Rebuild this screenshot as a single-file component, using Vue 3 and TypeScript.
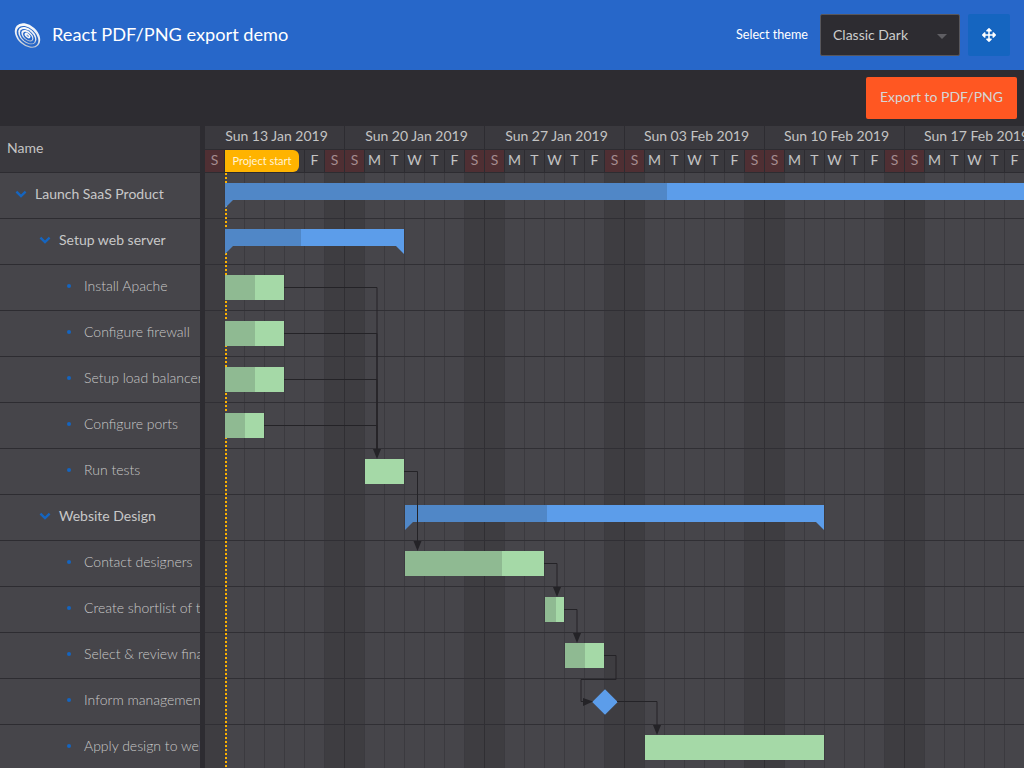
<template>
  <div class="page">
    <header class="topbar">
      <svg class="logo" viewBox="0 0 30 30">
        <defs>
          <linearGradient id="ring" x1="0" y1="0" x2="1" y2="1">
            <stop offset="0" stop-color="#ffffff" />
            <stop offset="0.6" stop-color="#e6eaf0" />
            <stop offset="1" stop-color="#a3acb9" />
          </linearGradient>
        </defs>
        <g transform="rotate(42 15 15)">
          <ellipse cx="15" cy="15" rx="15" ry="10.4" fill="url(#ring)" />
          <ellipse cx="15.6" cy="15.6" rx="13" ry="8.4" fill="#2767c9" />
          <ellipse cx="15" cy="15.2" rx="11" ry="7" fill="url(#ring)" />
          <ellipse cx="15.6" cy="15.6" rx="9.4" ry="5.6" fill="#2767c9" />
          <ellipse cx="15" cy="15.2" rx="7.4" ry="4.4" fill="url(#ring)" />
          <ellipse cx="15.6" cy="15.4" rx="5.8" ry="3.2" fill="#2767c9" />
          <ellipse cx="15" cy="15" rx="3.6" ry="2" fill="#f4f6f9" />
          <ellipse cx="15.4" cy="15" rx="1.6" ry="0.8" fill="#7f9fd2" />
        </g>
      </svg>
      <h1 class="title">React PDF/PNG export demo</h1>
      <label class="theme-label">Select theme</label>
      <div class="select">
        <span>Classic Dark</span>
        <i class="caret"></i>
      </div>
      <button class="move-btn">
        <svg viewBox="0 0 512 512" width="14" height="14">
          <path fill="#fff" d="M352.201 425.775l-79.196 79.196c-9.373 9.373-24.568 9.373-33.941 0l-79.196-79.196c-15.119-15.119-4.411-40.971 16.971-40.97h51.162V284H127.196v51.162c0 21.382-25.851 32.09-40.971 16.971L7.029 272.937c-9.373-9.373-9.373-24.569 0-33.941L86.225 159.8c15.119-15.119 40.971-4.411 40.971 16.971V228H228V127.196h-51.23c-21.382 0-32.09-25.851-16.971-40.971l79.196-79.196c9.373-9.373 24.568-9.373 33.941 0l79.196 79.196c15.119 15.119 4.411 40.971-16.971 40.971h-51.162V228h100.804v-51.162c0-21.382 25.851-32.09 40.97-16.971l79.196 79.196c9.373 9.373 9.373 24.569 0 33.941L425.773 352.2c-15.119 15.119-40.971 4.411-40.97-16.971V284H284v100.804h51.23c21.382 0 32.09 25.851 16.971 40.971z" />
        </svg>
      </button>
    </header>

    <div class="toolbar">
      <button class="export-btn">Export to PDF/PNG</button>
    </div>

    <div class="gantt">
      <section class="tree">
        <div class="tree-head">Name</div>
        <div v-for="t in tasks" :key="t.name" class="tree-row" :class="{ parent: t.parent }">
          <span class="indent" :style="{ width: t.level * 24 + 'px' }"></span>
          <svg v-if="t.parent" class="chevron" viewBox="0 0 12 8">
            <path d="M1.4 1.6 6 6l4.6-4.4" />
          </svg>
          <span v-else class="bullet"></span>
          <span class="label">{{ t.name }}</span>
        </div>
      </section>

      <div class="splitter"></div>

      <section class="timeline">
        <div class="scale">
          <div class="weeks">
            <div v-for="w in weeks" :key="w" class="week">{{ w }}</div>
          </div>
          <div class="days">
            <div v-for="(d, i) in days" :key="i" class="day" :class="{ off: d.off }">{{ d.letter }}</div>
          </div>
          <div class="marker-label">Project start</div>
        </div>

        <div class="chart">
          <div class="columns">
            <div
              v-for="(d, i) in days"
              :key="i"
              class="col"
              :class="{ off: d.off, 'week-end': i % 7 === 6 }"
            ></div>
          </div>
          <div class="rows">
            <div v-for="t in tasks" :key="t.name" class="row"></div>
          </div>
          <div class="today"></div>

          <svg class="links" width="819" height="595">
            <g fill="none" stroke="#242327" stroke-width="1">
              <path v-for="l in links" :key="l" :d="l" />
            </g>
            <polygon v-for="a in arrows" :key="a" :points="a" fill="#242327" />
          </svg>

          <template v-for="(t, i) in tasks" :key="t.name">
            <div
              v-if="t.parent"
              class="bar project"
              :style="{ left: t.x + 'px', width: t.w + 'px', top: i * 46 + 10 + 'px' }"
            >
              <div class="done" :style="{ width: t.done + 'px' }"></div>
              <i class="tip left"></i>
              <i class="tip right"></i>
            </div>
            <div
              v-else-if="t.w"
              class="bar task"
              :style="{ left: t.x + 'px', width: t.w + 'px', top: i * 46 + 10 + 'px' }"
            >
              <div class="done" :style="{ width: t.done + 'px' }"></div>
            </div>
            <div
              v-else
              class="milestone"
              :style="{ left: t.x + 'px', top: i * 46 + 14 + 'px' }"
            ></div>
          </template>
        </div>
      </section>
    </div>
  </div>
</template>

<script setup lang="ts">
interface Task {
  name: string
  level: number
  parent?: boolean
  x: number
  w: number
  done: number
}

// x is relative to the left edge of the timeline (page x 205)
const tasks: Task[] = [
  { name: 'Launch SaaS Product', level: 0, parent: true, x: 20, w: 1100, done: 442 },
  { name: 'Setup web server', level: 1, parent: true, x: 20, w: 179, done: 76 },
  { name: 'Install Apache', level: 2, x: 20, w: 59, done: 30 },
  { name: 'Configure firewall', level: 2, x: 20, w: 59, done: 30 },
  { name: 'Setup load balancer', level: 2, x: 20, w: 59, done: 30 },
  { name: 'Configure ports', level: 2, x: 20, w: 39, done: 20 },
  { name: 'Run tests', level: 2, x: 160, w: 39, done: 0 },
  { name: 'Website Design', level: 1, parent: true, x: 200, w: 419, done: 142 },
  { name: 'Contact designers', level: 2, x: 200, w: 139, done: 97 },
  { name: 'Create shortlist of three designers', level: 2, x: 340, w: 19, done: 11 },
  { name: 'Select & review final design', level: 2, x: 360, w: 39, done: 20 },
  { name: 'Inform management about decision', level: 2, x: 391, w: 0, done: 0 },
  { name: 'Apply design to website', level: 2, x: 440, w: 179, done: 0 }
]

const weeks = ['13 Jan', '20 Jan', '27 Jan', '03 Feb', '10 Feb', '17 Feb'].map((d) => `Sun ${d} 2019`)

const letters = ['S', 'M', 'T', 'W', 'T', 'F', 'S']
// the marker label covers the first working days, so those cells stay empty
const days = Array.from({ length: 42 }, (_, i) => ({
  letter: i >= 1 && i <= 4 ? '' : letters[i % 7],
  off: i % 7 === 0 || i % 7 === 6
}))

// chart origin is page (205, 173)
const links = [
  'M79 114.5H172V276',
  'M79 160.5H172V276',
  'M79 206.5H172V276',
  'M59 252.5H172V276',
  'M199 298.5H212.5V368',
  'M339 390.5H352V414',
  'M359 436.5H372V460',
  'M399 482.5H411V506.5H376V528.5H378',
  'M412 528.5H452V552'
]
const arrows = [
  '168,276 176,276 172,286',
  '208.5,368 216.5,368 212.5,378',
  '348,414 356,414 352,424',
  '368,460 376,460 372,470',
  '378,525 378,533 388,528.5',
  '448,552 456,552 452,562'
]
</script>

<style scoped>
.page {
  width: 1024px;
  height: 768px;
  overflow: hidden;
  display: flex;
  flex-direction: column;
  background: #2d2c31;
  font-family: Lato, "Open Sans", sans-serif;
}

.topbar {
  height: 70px;
  flex-shrink: 0;
  display: flex;
  align-items: center;
  padding: 0 14px;
  box-sizing: border-box;
  background: #2767c9;
  color: #fff;
}

.logo {
  width: 29px;
  height: 29px;
  flex-shrink: 0;
  margin-left: -1px;
}

.title {
  margin: 0 0 2px 10px;
  font-size: 18.2px;
  font-weight: 400;
  flex: 1;
}

.theme-label {
  font-size: 12.6px;
  margin: 0 12px 2px 0;
}

.select {
  width: 140px;
  height: 42px;
  box-sizing: border-box;
  display: flex;
  align-items: center;
  justify-content: space-between;
  padding: 0 12px 2px;
  background: #2d2c31;
  border: 1px solid #58575c;
  border-radius: 2px;
  color: #ccc;
  font-size: 14px;
}

.caret {
  width: 0;
  height: 0;
  border-left: 5.5px solid transparent;
  border-right: 5.5px solid transparent;
  border-top: 5.5px solid #5f5e63;
  margin-top: 5px;
}

.move-btn {
  width: 42px;
  height: 42px;
  margin-left: 8px;
  border: none;
  border-radius: 2px;
  background: #1565c0;
  display: flex;
  align-items: center;
  justify-content: center;
  padding: 0;
}

.toolbar {
  height: 56px;
  flex-shrink: 0;
  display: flex;
  justify-content: flex-end;
  align-items: center;
  padding-right: 7px;
  background: #2d2c31;
}

.export-btn {
  width: 151px;
  height: 42px;
  border: none;
  border-radius: 2px;
  background: #ff5722;
  color: #d6d6d6;
  font-family: inherit;
  font-size: 14px;
  padding: 0 0 4px;
}

.gantt {
  flex: 1;
  display: flex;
  min-height: 0;
}

.tree {
  width: 200px;
  flex-shrink: 0;
  overflow: hidden;
}

.tree-head {
  height: 47px;
  box-sizing: border-box;
  border-bottom: 1px solid #2d2c31;
  background: #3a393e;
  color: #c4c4c4;
  font-size: 14px;
  padding: 0 0 4px 7px;
  display: flex;
  align-items: center;
}

.tree-row {
  height: 46px;
  box-sizing: border-box;
  border-bottom: 1px solid #2d2c31;
  background: #46454a;
  display: flex;
  align-items: center;
  padding: 0 0 4px 15px;
  white-space: nowrap;
  color: #c8c8c8;
  font-size: 14px;
  font-weight: 300;
}

.tree-row.parent {
  font-weight: 400;
}

.indent {
  flex-shrink: 0;
}

.chevron {
  width: 12px;
  height: 8px;
  flex-shrink: 0;
  margin-right: 8px;
}

.chevron path {
  fill: none;
  stroke: #1565c0;
  stroke-width: 2.4;
}

.bullet {
  width: 4px;
  height: 4px;
  border-radius: 50%;
  flex-shrink: 0;
  background: #1565c0;
  margin-left: 4px;
  margin-right: 13px;
}

.splitter {
  width: 5px;
  flex-shrink: 0;
  background: #2d2c31;
}

.timeline {
  flex: 1;
  min-width: 0;
  overflow: hidden;
}

.scale {
  position: relative;
  height: 47px;
  box-sizing: border-box;
  border-bottom: 1px solid #2d2c31;
  background: #3a393e;
  color: #c4c4c4;
}

.weeks {
  display: flex;
  height: 24px;
  box-sizing: border-box;
  border-bottom: 1px solid #2d2c31;
}

.week {
  width: 140px;
  flex-shrink: 0;
  box-sizing: border-box;
  border-right: 1px solid #2d2c31;
  padding-left: 4px;
  text-align: center;
  font-size: 14px;
  line-height: 20px;
  white-space: nowrap;
}

.days {
  display: flex;
  height: 22px;
}

.day {
  width: 20px;
  flex-shrink: 0;
  box-sizing: border-box;
  border-right: 1px solid #2d2c31;
  text-align: center;
  font-size: 14px;
  line-height: 20px;
}

.day.off {
  background: #4f2f33;
  color: #a58c8f;
}

.marker-label {
  position: absolute;
  left: 20px;
  top: 24px;
  width: 74px;
  height: 22px;
  border-radius: 0 6px 6px 0;
  background: #ffb300;
  color: #fff3d6;
  font-size: 11px;
  line-height: 21px;
  text-align: center;
}

.chart {
  position: relative;
  background: #46454a;
}

.columns {
  position: absolute;
  inset: 0;
  display: flex;
}

.col {
  width: 20px;
  flex-shrink: 0;
  box-sizing: border-box;
  border-right: 1px solid #3b3a3f;
}

.col.off {
  background: #3e3d41;
}

.col.week-end {
  border-right-color: #302f33;
}

.rows {
  position: relative;
}

.row {
  height: 46px;
  box-sizing: border-box;
  border-bottom: 1px solid #302f34;
}

.today {
  position: absolute;
  left: 20px;
  top: 0;
  bottom: 0;
  width: 2px;
  background: repeating-linear-gradient(to bottom, #ffb300 0 2px, transparent 2px 4px);
}

.links {
  position: absolute;
  left: 0;
  top: 0;
  z-index: 2;
}

.bar {
  position: absolute;
  z-index: 1;
}

.bar .done {
  height: 100%;
}

.task {
  height: 25px;
  background: #a5d9a7;
}

.task .done {
  background: #8fba92;
}

.project {
  height: 17px;
  background: #5c9dea;
}

.project .done {
  background: #5087c7;
}

.tip {
  position: absolute;
  top: 17px;
  width: 8px;
  height: 8px;
}

.tip.left {
  left: 0;
  background: #5087c7;
  clip-path: polygon(0 0, 100% 0, 0 100%);
}

.tip.right {
  right: 0;
  background: #5c9dea;
  clip-path: polygon(0 0, 100% 0, 100% 100%);
}

.milestone {
  position: absolute;
  z-index: 1;
  width: 18px;
  height: 18px;
  background: #5c9dea;
  transform: rotate(45deg);
}
</style>

<style>
html, body {
  margin: 0;
  background: #2d2c31;
}
</style>
